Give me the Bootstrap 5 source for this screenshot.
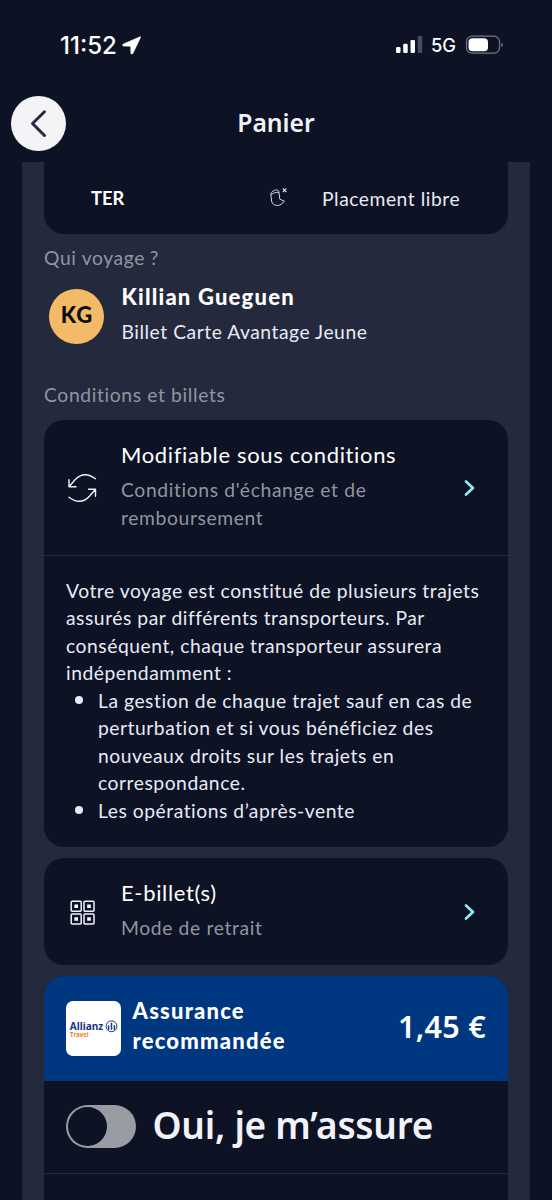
<!DOCTYPE html>
<html lang="fr">
<head>
<meta charset="utf-8">
<meta name="viewport" content="width=device-width, initial-scale=1">
<title>Panier</title>
<link href="https://cdn.jsdelivr.net/npm/bootstrap@5.3.0/dist/css/bootstrap.min.css" rel="stylesheet">
<style>
  body { background:#0d1224; color:#e8ebf5; font-family:Lato,"Liberation Sans",sans-serif; height:1200px; overflow:hidden; font-size:19.3px; line-height:27.5px; letter-spacing:.53px; }
  svg { display:block; flex:none; }
  .status-row { height:72px; padding:28px 48px 0 60px; font-family:Inter,sans-serif; color:#fff; letter-spacing:0; }
  .clock { font-size:24px; font-weight:500; line-height:35px; width:62px; }
  .net { font-size:18.3px; font-weight:500; line-height:35px; width:34px; }
  .app-head { height:90px; padding:24px 11px 0; display:grid; grid-template-columns:55px 1fr 55px; }
  .back-btn { width:55px; height:55px; background:#f4f4f6; padding:0; border:0; }
  .humanist { font-family:"Noto Sans",sans-serif; font-weight:600; letter-spacing:0; white-space:nowrap; }
  .app-title { font-size:24.7px; line-height:53px; color:#f0f1f7; }
  .panel { background:#24293d; margin:0 22px; padding:0 22px; height:1038px; }
  .tile { background:#0d1224; border-radius:20px; }
  .tile-top { border-radius:0 0 20px 20px; height:72px; padding:22.500px 47px 0; margin-bottom:10px; }
  .carrier { width:179px; font-size:18.3px; letter-spacing:0; color:#fff; }
  .soft { color:#92959f; letter-spacing:.63px; }
  .tight-mark { margin-left:-1px; }
  .who { height:109.500px; padding-left:5px; gap:17.500px; }
  .avatar { width:55px; height:55px; margin-top:17px; background:#f3bb68; color:#0c0c10; font-weight:900; font-size:22px; letter-spacing:1px; padding:0 0 3px 1px; }
  .name { font-size:22px; font-weight:900; line-height:30px; color:#fff; letter-spacing:1.200px; }
  .who .name { margin:10px 0 6px; }
  .ttl { font-size:22px; line-height:30px; color:#fff; letter-spacing:.65px; margin-bottom:6px; }
  .opt { padding:20px 32px 0 22px; }
  .opt-cond { height:134.500px; }
  .opt-ticket { height:107px; }
  .lead-ico { width:55px; }
  .rule { border-top:1.5px solid #24293d; }
  .body-text { padding:21px 22px 0; height:292.500px; }
  .body-text ul { padding-left:32px; }
  .body-text li::marker { font-size:24px; line-height:0; }
  .insure { background:#003781; height:104.5px; border-radius:20px 20px 0 0; padding:0 22px; gap:11.500px; }
  .logo-box { width:55px; height:55px; border-radius:7px; background:#fff; }
  .price { font-size:30.5px; color:#fff; line-height:40px; margin-bottom:5px; letter-spacing:.3px; }
  .toggle-row { height:92px; padding:0 22px; gap:16.500px; }
  .switch-track { width:70px; height:43px; border-radius:22px; background:#9a9ca3; padding:2px 1.500px; }
  .switch-knob { width:39px; height:39px; border-radius:50%; background:#0d1224; }
  .switch-label { font-size:37px; line-height:52px; letter-spacing:-.25px; color:#f2f3fa; margin-bottom:3px; }
</style>
</head>
<body>
<header>
  <div class="status-row d-flex justify-content-between">
    <div class="d-flex"><span class="clock">11:52</span>
      <svg width="19" height="19" viewBox="0 0 19 19" style="margin-top:8px"><path d="M18 .8 1.3 8.1c-1.2.6-.9 1.8.3 1.9l6.5.2c.4 0 .6.2.6.6l.2 6.3c.1 1.3 1.4 1.5 2 .3L18.500 1.500c.3-.6 0-1-.5-.7z" fill="#fff" stroke="#fff" stroke-width=".6"/></svg>
    </div>
    <div class="d-flex">
      <svg width="35" height="18" viewBox="0 0 35 18" style="margin-top:8px"><g fill="#fff"><rect x="0" y="11" width="4.500" height="6" rx="1.300"/><rect x="7.200" y="7.700" width="4.500" height="9.300" rx="1.300"/><rect x="14.500" y="4" width="4.500" height="13" rx="1.300"/><rect x="21.700" y="0" width="4.500" height="17" rx="1.300" opacity=".25"/></g></svg>
      <span class="net">5G</span>
      <svg width="39" height="20" viewBox="0 0 39 20" style="margin-top:7px"><rect x="1.500" y="1.200" width="33" height="17" rx="5.500" fill="none" stroke="#767986" stroke-width="1.200"/><rect x="3.500" y="3.200" width="19.500" height="13" rx="4" fill="#fff"/><path d="M36.300 7.400c2 .8 2 3.800 0 4.600z" fill="#767986"/></svg>
    </div>
  </div>
  <div class="app-head">
    <button class="back-btn btn rounded-circle" aria-label="Retour"><svg class="mx-auto" width="55" height="55" viewBox="0 0 55 55"><path d="M33.500 15.800 21.500 27.500 33.500 39.500" fill="none" stroke="#262b3e" stroke-width="3" stroke-linecap="round" stroke-linejoin="round"/></svg></button>
    <h1 class="app-title humanist text-center m-0">Panier</h1>
  </div>
</header>
<main class="panel">
  <section class="tile tile-top d-flex">
    <span class="carrier fw-bold">TER</span>
    <svg width="52" height="23" viewBox="0 -3.500 52 23"><g fill="none" stroke="#d5d8e4" stroke-width="1" stroke-linejoin="round"><path d="M.800 5.500C1 3.500 4 1.500 6.500 1.400c1.400 0 2.200.900 2.400 2.200l.9 7.100c1.200.9 3 .9 4.600 1.900-1.500 2.300-4.200 4.300-6.700 4.400C4.500 17 2 15.500 1.600 12.500zM1.200 6c2-1.500 4.500-2.200 7.700-2.200"/><path d="m12.800 0 3.500 3.500m0-3.500-3.500 3.500" stroke-width="1.200"/></g></svg>
    <span>Placement libre</span>
  </section>
  <div class="soft">Qui voyage <span class="tight-mark">?</span></div>
  <section class="who d-flex">
    <div class="avatar rounded-circle d-flex align-items-center justify-content-center">KG</div>
    <div><div class="name">Killian Gueguen</div><div>Billet Carte Avantage Jeune</div></div>
  </section>
  <div class="soft">Conditions et billets</div>

  <section class="tile" style="margin-top:11.5px">
    <div class="opt opt-cond d-flex">
      <div class="lead-ico"><svg width="32" height="32" viewBox="0 0 32 32" style="margin-top:32.500px"><g fill="none" stroke="#f2f4fb" stroke-width="1.400" stroke-linecap="round" stroke-linejoin="round"><path d="M29.500 5.800C22 .200 14.500.800 8.800 7L3 13.800M3 6.800v7h7M3 24.200c7.500 5.600 15 5 20.700-1.200l5.800-6.800M29.500 23.200v-7h-7"/></g></svg></div>
      <div class="flex-grow-1"><div class="ttl">Modifiable sous conditions</div><div class="soft">Conditions d'échange et de<br>remboursement</div></div>
      <svg width="14" height="18" viewBox="0 0 14 18" style="margin-top:39px"><path d="m4 2.500 7 6.500-7 6.500" fill="none" stroke="#8ee8fb" stroke-width="2.800" stroke-linecap="round" stroke-linejoin="round"/></svg>
    </div>
    <div class="rule body-text">
      Votre voyage est constitué de plusieurs trajets<br>assurés par différents transporteurs. Par<br>conséquent, chaque transporteur assurera<br>indépendamment&nbsp;:
      <ul class="m-0">
        <li>La gestion de chaque trajet sauf en cas de<br>perturbation et si vous bénéficiez des<br>nouveaux droits sur les trajets en<br>correspondance.</li>
        <li>Les opérations d’après-vente</li>
      </ul>
    </div>
  </section>

  <section class="tile opt opt-ticket d-flex" style="margin-top:11px">
    <div class="lead-ico"><svg width="32" height="32" viewBox="0 0 32 32" style="margin-top:17.500px"><g fill="none" stroke="#f2f4fb" stroke-width="1.500"><rect x="5.200" y="5.200" width="10" height="10" rx="1"/><rect x="18" y="5.200" width="10" height="10" rx="1"/><rect x="5.200" y="18" width="10" height="10" rx="1"/><rect x="18" y="18" width="10" height="10" rx="1"/></g><path d="M8.400 8.400H12V12H8.400zM21.200 8.400h3.600V12h-3.600zM8.400 21.200H12v3.600H8.400zM21.200 21.200h3.600v3.600h-3.600z" fill="#fff"/></svg></div>
    <div class="flex-grow-1"><div class="ttl">E-billet(s)</div><div class="soft">Mode de retrait</div></div>
    <svg width="14" height="18" viewBox="0 0 14 18" style="margin-top:25px"><path d="m4 2.500 7 6.500-7 6.500" fill="none" stroke="#8ee8fb" stroke-width="2.800" stroke-linecap="round" stroke-linejoin="round"/></svg>
  </section>

  <section class="tile" style="margin-top:11px;height:240px">
    <div class="insure d-flex align-items-center">
      <svg class="logo-box" viewBox="0 0 55 55" role="img" aria-label="Allianz Travel"><text x="3.700" y="28.800" textLength="33.500" lengthAdjust="spacingAndGlyphs" font-family="Noto Sans, sans-serif" font-weight="700" font-size="11" letter-spacing="0" fill="#13387f">Allianz</text><text x="4" y="36.300" textLength="18.500" lengthAdjust="spacingAndGlyphs" font-family="Open Sans, sans-serif" font-weight="700" font-size="7" letter-spacing="0" fill="#f47b20">Travel</text><g fill="none" stroke="#13387f"><circle cx="45.500" cy="25.300" r="5.400" stroke-width="1"/><path d="M45.500 21.800v7M42.600 28.800v-4.500M48.400 28.800v-4.500" stroke-width="1.500"/></g></svg>
      <div class="name flex-grow-1" style="margin-bottom:4px">Assurance<br>recommandée</div>
      <div class="price humanist">1,45 €</div>
    </div>
    <div class="toggle-row d-flex align-items-center">
      <div class="switch-track" role="switch" aria-checked="false"><div class="switch-knob"></div></div>
      <div class="switch-label humanist">Oui, je m’assure</div>
    </div>
    <div class="rule"></div>
  </section>
</main>
<script src="https://cdn.jsdelivr.net/npm/bootstrap@5.3.0/dist/js/bootstrap.bundle.min.js"></script>
</body>
</html>
